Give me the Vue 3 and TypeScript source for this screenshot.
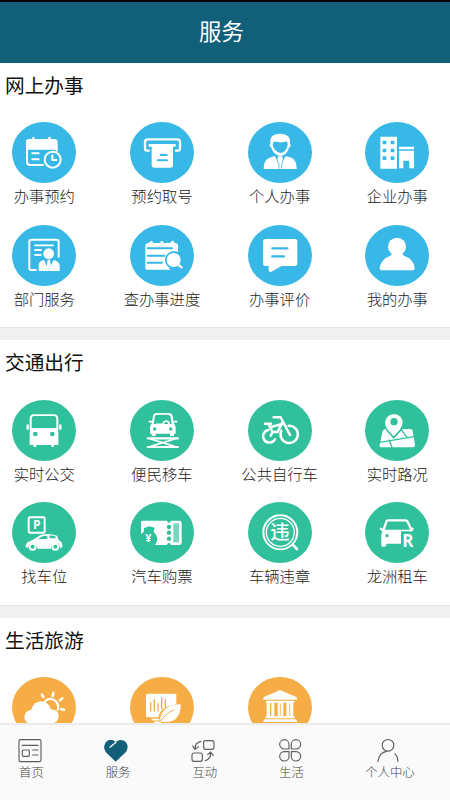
<script setup lang="ts">
interface Service {
  icon: string
  label?: string
}
interface Section {
  title: string
  tone: 'blue' | 'green' | 'orange'
  items: Service[]
}

const sections: Section[] = [
  {
    title: '网上办事',
    tone: 'blue',
    items: [
      { icon: 'calendar', label: '办事预约' },
      { icon: 'ticket-machine', label: '预约取号' },
      { icon: 'person-suit', label: '个人办事' },
      { icon: 'building', label: '企业办事' },
      { icon: 'department', label: '部门服务' },
      { icon: 'progress', label: '查办事进度' },
      { icon: 'comment', label: '办事评价' },
      { icon: 'mine', label: '我的办事' },
    ],
  },
  {
    title: '交通出行',
    tone: 'green',
    items: [
      { icon: 'bus', label: '实时公交' },
      { icon: 'lift', label: '便民移车' },
      { icon: 'bike', label: '公共自行车' },
      { icon: 'map', label: '实时路况' },
      { icon: 'parking', label: '找车位' },
      { icon: 'coupon', label: '汽车购票' },
      { icon: 'violation', label: '车辆违章' },
      { icon: 'rental', label: '龙洲租车' },
    ],
  },
  {
    title: '生活旅游',
    tone: 'orange',
    items: [{ icon: 'weather' }, { icon: 'air' }, { icon: 'museum' }],
  },
]

const tabs = [
  { icon: 'tab-home', label: '首页' },
  { icon: 'tab-heart', label: '服务' },
  { icon: 'tab-swap', label: '互动' },
  { icon: 'tab-life', label: '生活' },
  { icon: 'tab-user', label: '个人中心' },
]
</script>

<template>
  <div class="screen">
    <svg class="sprite" aria-hidden="true">
      <symbol id="calendar" viewBox="37 22 192 183">
        <path class="s" stroke-width="6" d="M130 151H92Q82 151 82 141V82M171 100V108" />
        <path class="w" d="M79 105V82Q79 73 88 73H98V68Q101 64 104 68V73H146V68Q149 64 153 68V73H164Q174 73 174 82V105Z" />
        <path class="s" stroke-width="6" d="M98 116H117M98 134H117" />
        <circle class="s" stroke-width="6" cx="159" cy="135" r="24" />
        <path class="s" stroke-width="6" d="M158 122V136H170" />
      </symbol>
      <symbol id="ticket-machine" viewBox="390 22 192 183">
        <path class="s" stroke-width="7" d="M446 108H440Q435 108 435 101V82Q435 74 443 74H532Q540 74 540 82V101Q540 108 533 108H528" />
        <path class="w" d="M446 88H527V96H519V151Q519 159 511 159H463Q455 159 455 151V96H446Z" />
        <path class="k" stroke-width="6" d="M482 121H500M473 137H501" />
      </symbol>
      <symbol id="person-suit" viewBox="68 22 192 183">
        <path class="w" d="M135 84Q132 58 164 57Q197 59 194 84L196 94L191 99Q185 121 165 124Q144 120 138 99L133 94Z" />
        <path class="c" d="M142 91Q143 79 153 81Q172 86 184 80Q187 84 187 91Q183 112 165 115Q147 111 142 91Z" />
        <path class="w" d="M115 163Q115 137 131 130L148 124L162 146V163ZM168 163V145L182 124L200 130Q214 137 214 163Z" />
        <path class="w" d="M158 125H171L175 145V163H155L154 145Z" />
        <path class="k" stroke-width="2.5" d="M153 130L161 149V161M176 130L169 149V161" />
      </symbol>
      <symbol id="building" viewBox="421 22 192 183">
        <path class="w" d="M467 66H517V162H467ZM523 96H568V104H523ZM523 108H568V161H554V138H536V161H523Z" />
        <path class="c" d="M474 78h11v11h-11zM498 78h11v11h-11zM474 102h11v11h-11zM498 102h11v11h-11zM474 125h11v11h-11zM498 125h11v11h-11z" />
      </symbol>
      <symbol id="department" viewBox="37 30 192 183">
        <path class="s" stroke-width="6" d="M108 165H94Q89 165 89 159V80Q89 74 95 74H171Q177 74 177 80V125" />
        <path class="s" stroke-width="5.5" d="M106 91H160M106 105H124M106 120H123" />
        <circle class="w" cx="147" cy="116" r="16" />
        <path class="w" d="M117 168V151Q118 138 133 135L147 166L162 135Q178 139 180 151V168Z" />
        <path class="w" d="M144 134H151L154 155L148 164L141 155Z" />
      </symbol>
      <symbol id="progress" viewBox="390 30 192 183">
        <path class="w" d="M436 92Q436 84 446 84L452 78Q456 76 460 84H479L484 78Q488 76 491 84H510L516 78Q521 76 524 84Q534 85 534 92V164H441Q436 164 436 158Z" />
        <path class="k" stroke-width="6" d="M443 100H516M443 122H493M443 143H486" />
        <circle class="c" cx="522" cy="135" r="27" />
        <circle class="w" cx="521" cy="135" r="21" />
        <path class="k" stroke-width="6" d="M510 160Q525 168 538 158" />
        <path class="s" stroke-width="7" d="M533 148L545 157" />
      </symbol>
      <symbol id="comment" viewBox="68 30 192 183">
        <path class="w" d="M121 72H209Q216 72 216 80V145Q216 153 208 153H169L137 171Q130 173 130 165V153H121Q113 153 113 145V80Q113 72 121 72Z" />
        <path class="k" stroke-width="7" d="M141 100H186M141 124H176" />
      </symbol>
      <symbol id="mine" viewBox="421 30 192 183">
        <circle class="w" cx="517" cy="95" r="27" />
        <path class="w" d="M502 117H533L538 122Q567 132 570 158Q570 166 562 166H473Q465 166 465 158Q469 132 497 122Z" />
      </symbol>

      <symbol id="bus" viewBox="37 164 192 183">
        <path class="w" d="M103 207H162Q176 207 176 221V299H163V303Q159 308 155 303V299H110V303Q105 308 101 303V299H90V221Q90 207 103 207Z" />
        <path class="c" d="M103 212H162Q170 212 170 220V248H96V220Q96 212 103 212Z" />
        <circle class="c" cx="107" cy="266" r="7" />
        <circle class="c" cx="158" cy="266" r="7" />
        <path class="s" stroke-width="7" d="M84 240V250M182 240V250" />
      </symbol>
      <symbol id="lift" viewBox="390 164 192 183">
        <path class="w" d="M455 272V265H450V248Q450 239 455 235L459 211Q461 203 471 203H505Q516 203 518 211L522 235Q527 239 527 248V265H522V272H510V265H467V272Z" />
        <path class="c" d="M467 210Q469 208 475 208H503Q509 208 511 213L515 236H461L465 213Z" />
        <path class="s" stroke-width="5" d="M469 237H490Q489 228 499 227Q508 229 507 237M448 229H454M524 229H530" />
        <circle class="c" cx="464" cy="251" r="5" />
        <circle class="c" cx="512" cy="251" r="5" />
        <path class="s" stroke-width="6.5" d="M443 279H534M443 305H534" />
        <path class="s" stroke-width="5" d="M452 281L524 303M524 281L452 303" />
      </symbol>
      <symbol id="bike" viewBox="68 164 192 183">
        <path class="s" stroke-width="7.5" d="M129 254A19 19 0 1 0 149 282M168 256A26 26 0 1 0 190 241M119 235H137M129 236L142 260H157L171 231M142 260L136 271M145 216H166L194 269M137 245L170 236" />
      </symbol>
      <symbol id="map" viewBox="421 164 192 183">
        <path class="w" d="M480 251H557Q563 251 564 257L571 299Q571 306 564 306H471Q464 306 465 299L474 256Z" />
        <path class="k" stroke-width="4" d="M465 291L568 274M529 252L548 277M493 284L502 305" />
        <path class="k" stroke-width="5" d="M507 277L486 253Q474 234 485 217Q507 194 530 217Q542 234 529 253Z" />
        <path class="w" d="M507 272L487 250Q478 236 484 222Q491 207 508 207Q525 207 532 222Q537 236 527 250Z" />
        <circle class="c" cx="508" cy="229" r="11" />
      </symbol>
      <symbol id="parking" viewBox="37 36 192 183">
        <rect class="s" stroke-width="6" x="87" y="82" width="48" height="46" rx="4" />
        <text class="glyph bold" x="111" y="118" font-size="36">P</text>
        <path class="w" d="M78 172Q77 157 91 154Q108 146 121 136Q147 127 172 137L177 150Q190 156 188 172L181 174Q181 158 167 158Q153 160 154 176H113Q113 158 98 158Q86 160 86 173Z" />
        <path class="c" d="M115 147Q125 137 143 137V147ZM149 137Q161 136 167 139L168 145H151Z" />
        <circle class="s" stroke-width="6" cx="99" cy="170" r="9" />
        <circle class="s" stroke-width="6" cx="167" cy="170" r="9" />
      </symbol>
      <symbol id="coupon" viewBox="390 36 192 183">
        <path class="w" d="M427 92H501Q502 98 507 98Q512 98 513 92H538Q545 92 545 99V158Q545 165 538 165H513Q512 159 507 159Q502 159 501 165H465Q474 154 472 143Q469 132 461 126L464 113L448 109L432 114L431 126L423 132V97Q423 92 427 92Z" />
        <circle class="c" cx="507" cy="111" r="6.5" />
        <circle class="c" cx="507" cy="128" r="6.5" />
        <circle class="c" cx="507" cy="146" r="6.5" />
        <rect class="c" x="520" y="100" width="17" height="57" opacity=".65" />
        <text class="glyph bold" x="445" y="156" font-size="32">¥</text>
      </symbol>
      <symbol id="violation" viewBox="68 36 192 183">
        <circle class="s" stroke-width="6" cx="165" cy="127" r="51" />
        <circle class="s" stroke-width="4" cx="165" cy="127" r="42" />
        <text class="glyph cjk" x="164" y="148" font-size="58">违</text>
        <path class="s" stroke-width="8" d="M202 164L215 177" />
      </symbol>
      <symbol id="rental" viewBox="421 36 192 183">
        <path class="s" stroke-width="7" d="M476 121L486 93Q487 91 491 91H543Q547 91 549 95L559 117M468 116L475 121M558 121L564 116" />
        <path class="w" d="M475 119H564V124H529V161H485V166Q484 170 479 170H474Q470 170 470 166V133Z" />
        <circle class="c" cx="487" cy="137" r="5" />
        <text class="glyph bold" x="550" y="170" font-size="51">R</text>
      </symbol>

      <symbol id="weather" viewBox="37 171 192 183">
        <path class="s" stroke-width="6.5" d="M135 245Q146 232 162 239Q180 250 174 270" />
        <path class="s" stroke-width="7.5" d="M127 224L131 231M161 218L159 228M188 235L181 241M184 267L193 269" />
        <path class="w" d="M88 310Q74 304 74 290Q76 272 95 269Q101 245 125 244Q148 246 153 268Q174 268 177 286Q177 305 161 310Z" />
      </symbol>
      <symbol id="air" viewBox="390 171 192 183">
        <rect class="w" x="438" y="221" width="91" height="71" rx="5" />
        <path class="k" stroke-width="4" d="M452 248V273M463 239V273M474 251V273M485 233V266M496 239V260" />
        <path class="k" stroke-width="7" d="M478 308Q475 276 500 264L542 253V272Q535 298 520 303Z" />
        <path class="w" d="M480 302Q481 276 500 264Q515 253 542 253Q543 278 530 294Q516 309 487 305Z" />
        <path class="k" stroke-width="3" d="M478 308Q494 283 520 270" />
        <path class="s" stroke-width="5" d="M457 299H476M465 307H481" />
      </symbol>
      <symbol id="museum" viewBox="68 171 192 183">
        <path class="w" d="M164 210L213 231Q215 233 215 239H114Q114 233 116 231ZM122 242H207V248H122ZM124 248H134V289H124ZM138 248H147V289H138ZM157 248H174V289H157ZM183 248H204V289H183ZM121 289H208V295H121ZM116 298H212L216 306H114Z" />
        <path class="k" stroke-width="2.5" d="M165 252V286M193 252V286" />
      </symbol>

      <symbol id="tab-home" viewBox="50 354 78 75">
        <g class="o">
          <rect x="56" y="359" width="66" height="66" rx="5" />
          <path d="M65 376H113M97 390H113M97 405H113" />
          <rect x="66" y="390" width="21" height="19" rx="3" />
        </g>
      </symbol>
      <symbol id="tab-heart" viewBox="311 354 78 75">
        <path fill="#115f79" d="M349 425L319 396Q309 380 320 366Q334 353 349 366Q366 353 380 367Q390 382 379 397Z" />
        <path d="M332 382L350 367" fill="none" stroke="#fafafa" stroke-width="4" stroke-linecap="round" />
      </symbol>
      <symbol id="tab-swap" viewBox="571 354 78 75">
        <g class="o">
          <rect x="612" y="362" width="31" height="26" rx="6" />
          <rect x="577" y="399" width="31" height="25" rx="6" />
          <path d="M604 364Q586 367 586 387M579 378L586 388L597 380M617 422Q634 418 633 397M624 404L633 396L641 407" />
        </g>
      </symbol>
      <symbol id="tab-life" viewBox="156 354 78 75">
        <path class="o" d="M192 387H178A14 14 0 1 1 192 373ZM199 387V373A14 14 0 1 1 213 387ZM192 395V410A14 14 0 1 1 178 395ZM199 395H213A14 14 0 1 1 199 410Z" />
      </symbol>
      <symbol id="tab-user" viewBox="454 354 78 75">
        <g class="o">
          <circle cx="493" cy="376" r="17.5" />
          <path d="M463 424Q467 397 489 394M514 401Q522 409 523 424" />
        </g>
      </symbol>
    </svg>

    <header class="header">服务</header>

    <main class="content">
      <section v-for="s in sections" :key="s.title" class="section">
        <h2 class="title">{{ s.title }}</h2>
        <div class="grid">
          <a v-for="item in s.items" :key="item.icon" class="service">
            <span class="disc" :class="s.tone">
              <svg class="icon"><use :href="'#' + item.icon" /></svg>
            </span>
            <span v-if="item.label" class="label">{{ item.label }}</span>
          </a>
        </div>
      </section>
    </main>

    <nav class="tabs">
      <a v-for="tab in tabs" :key="tab.icon" class="tab">
        <svg class="tab-icon"><use :href="'#' + tab.icon" /></svg>
        <span>{{ tab.label }}</span>
      </a>
    </nav>
  </div>
</template>

<style>
body {
  margin: 0;
  background: #fff;
}
</style>

<style scoped>
.screen {
  display: flex;
  flex-direction: column;
  width: 450px;
  height: 800px;
  overflow: hidden;
  background: #fff;
  font-family: "Noto Sans CJK SC", sans-serif;
  font-weight: 300;
}
.sprite {
  display: none;
}
.w {
  fill: #fff;
}
.c {
  fill: currentColor;
}
.s,
.k,
.o {
  fill: none;
  stroke: #fff;
  stroke-linecap: round;
  stroke-linejoin: round;
}
.k {
  stroke: currentColor;
}
.o {
  stroke: #5c5c5c;
  stroke-width: 3.4;
}
.glyph {
  fill: #fff;
  font-family: "Noto Sans CJK SC", sans-serif;
  text-anchor: middle;
}
.cjk {
  font-weight: 500;
}
.bold {
  font-family: "Open Sans", sans-serif;
  font-weight: 700;
}
.header {
  flex: none;
  box-sizing: border-box;
  height: 63px;
  padding-right: 7px;
  border-top: 2px solid #000;
  background: #115f79;
  color: #fff;
  font-size: 22.4px;
  font-weight: 400;
  line-height: 56px;
  text-align: center;
}
.content {
  flex: 1;
  min-height: 0;
  overflow: hidden;
}
.section {
  box-sizing: border-box;
  height: 277.3px;
  border-bottom: 12px solid #f0f0f0;
  box-shadow: inset 0 -1px 0 #e4e4e4;
}
.title {
  margin: 0;
  padding: 7px 0 0 5px;
  height: 52.3px;
  color: #111;
  font-size: 19.7px;
  font-weight: 400;
  line-height: 30px;
}
.grid {
  display: grid;
  grid-template-columns: repeat(4, 64px);
  grid-auto-rows: 102.5px;
  column-gap: 53.67px;
  padding-left: 12.3px;
}
.service {
  display: flex;
  flex-direction: column;
  align-items: center;
}
.disc {
  flex: none;
  width: 64px;
  height: 61px;
  border-radius: 50%;
}
.blue {
  background: #38b8e6;
  color: #38b8e6;
}
.green {
  background: #30c19c;
  color: #30c19c;
}
.orange {
  background: #f7ad45;
  color: #f7ad45;
}
.icon {
  display: block;
  width: 64px;
  height: 61px;
}
.label {
  color: #222;
  font-size: 15.3px;
  line-height: 24.4px;
  white-space: nowrap;
}
.tabs {
  flex: none;
  display: flex;
  gap: 60.7px;
  box-sizing: border-box;
  height: 77px;
  padding: 13px 0 0 18.4px;
  border-top: 2px solid #ebebeb;
  background: #fafafa;
}
.tab {
  display: flex;
  flex-direction: column;
  align-items: center;
  color: #444;
  font-size: 12.4px;
  line-height: 19.4px;
  white-space: nowrap;
}
.tab-icon {
  display: block;
  width: 26px;
  height: 25px;
  margin: 0 1.7px 0 -1.7px;
}
</style>
